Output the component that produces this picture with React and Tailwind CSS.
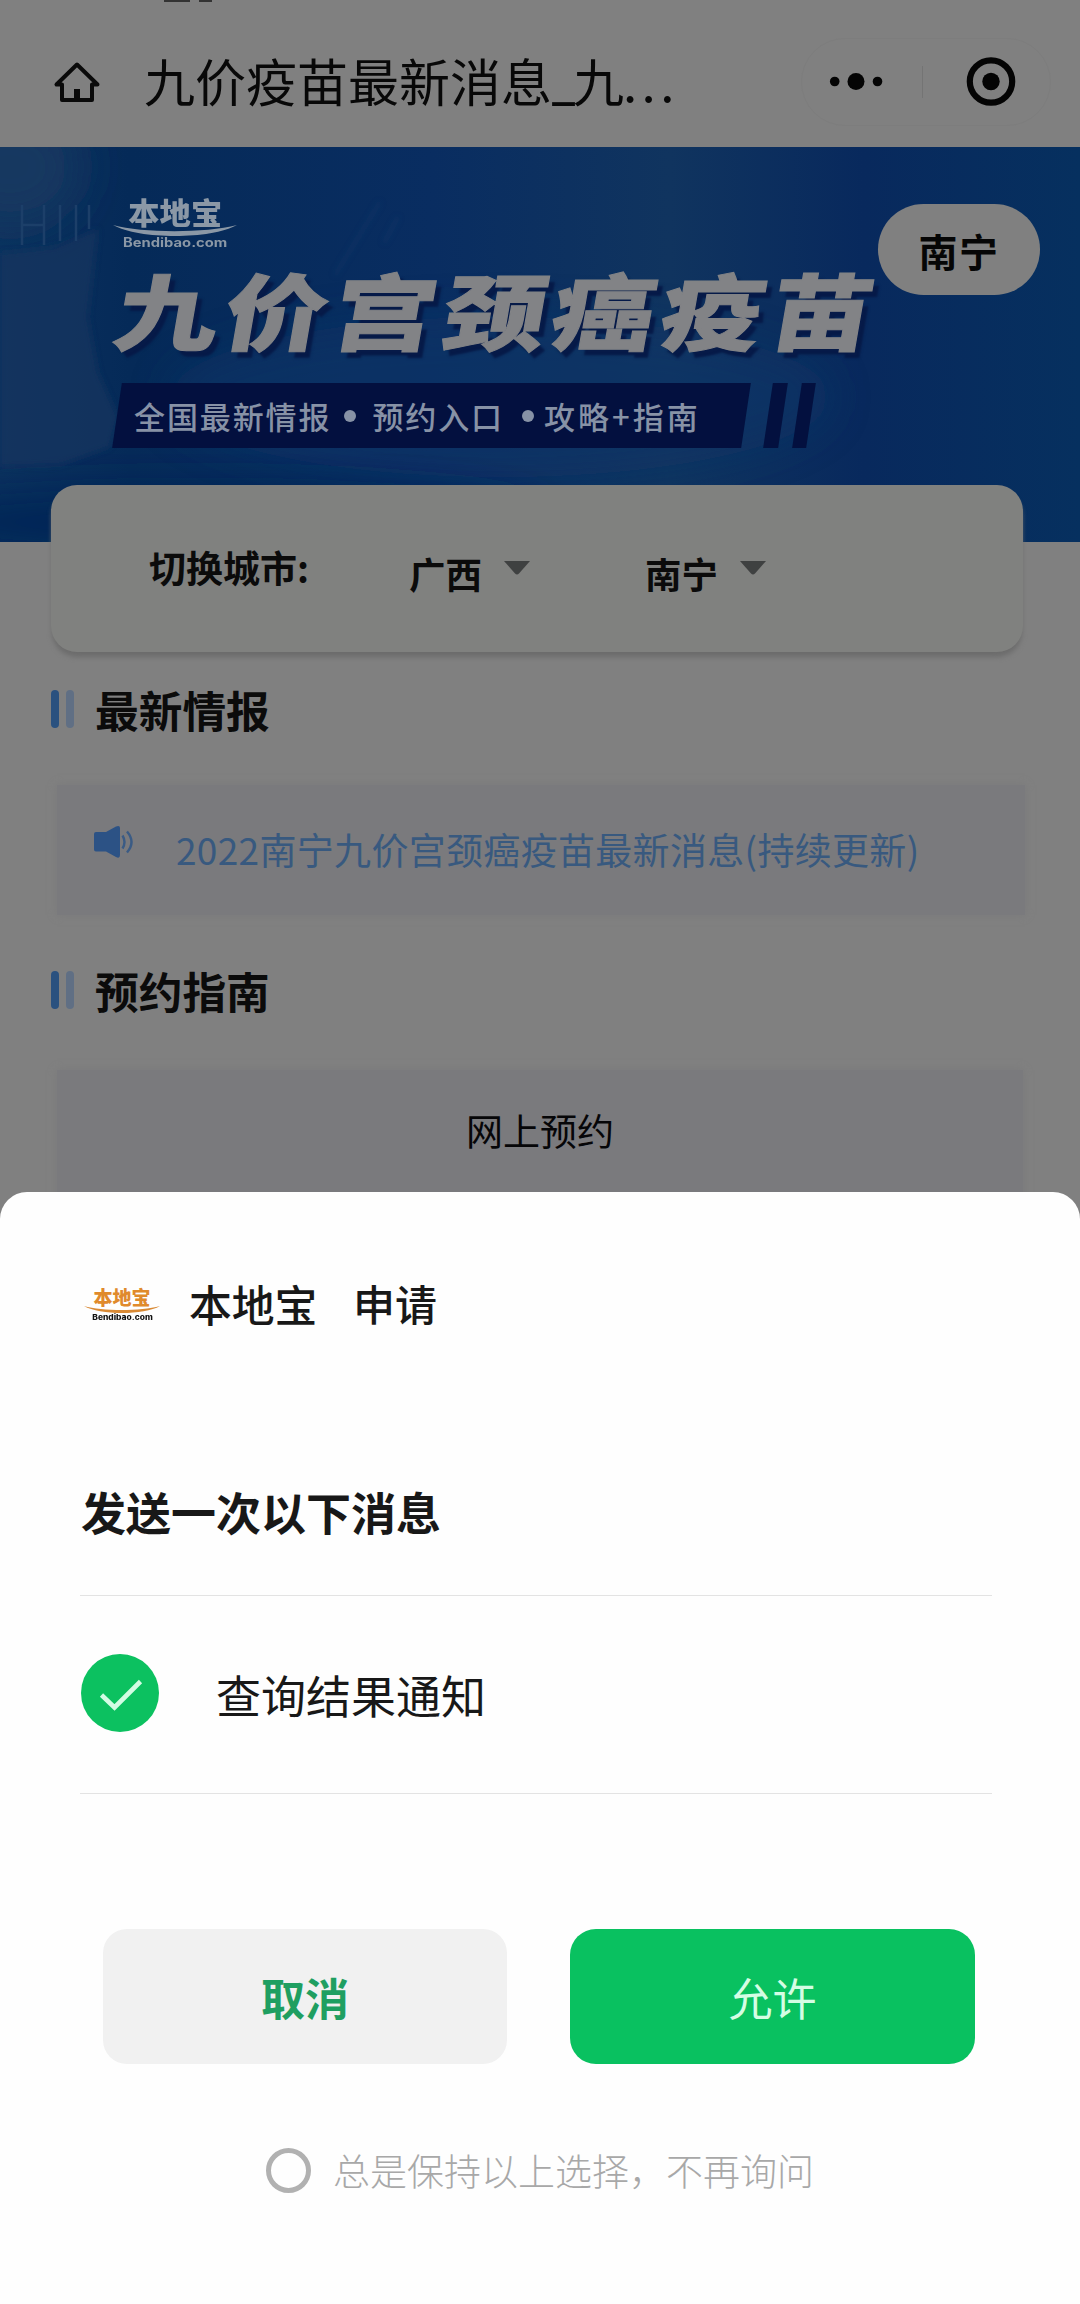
import React from "react";

function HomeIcon() {
  return (
    <svg className="h-[42px] w-[48px]" viewBox="0 0 48 42" fill="none" stroke="#0a0a0a" strokeWidth="4" strokeLinejoin="round">
      <path d="M24 3.5 L3.5 23.500 H9 V39 H39 V23.500 H44.500 Z" />
      <path d="M24 28 V39" strokeWidth="6" />
    </svg>
  );
}

function Capsule() {
  return (
    <div className="ml-auto mr-[29px] flex h-[88px] w-[250px] items-center rounded-full border border-[#7d7d7d]">
      <svg className="h-[60px] w-full" viewBox="0 0 248 60">
        <g fill="#040404">
          <circle cx="32.700" cy="29.500" r="4.800" />
          <circle cx="54" cy="29.500" r="8.500" />
          <circle cx="75.500" cy="29.500" r="4.800" />
          <circle cx="189" cy="29.500" r="8.700" />
        </g>
        <path d="M120.500 14 V46" stroke="#747474" strokeWidth="1" />
        <circle cx="189" cy="29.500" r="21.200" fill="none" stroke="#040404" strokeWidth="6.200" />
      </svg>
    </div>
  );
}

function TopBar() {
  return (
    <header className="relative flex h-[147px] items-start bg-[#808080]">
      <div className="absolute left-[164px] top-0 flex gap-[9px]">
        <i className="h-[2px] w-[26px] bg-[#333]" />
        <i className="h-[2px] w-[13px] bg-[#333]" />
      </div>
      <div className="mt-[61px] ml-[53px] w-[91px]">
        <HomeIcon />
      </div>
      <h1 className="mt-[43px] whitespace-nowrap text-[51px] leading-[74px] text-[#080808]">
        九价疫苗最新消息<span className="inline-block w-[21px] font-[Roboto]">_</span>九
        <span className="-ml-[1px] tracking-[4.400px]">...</span>
      </h1>
      <div className="mt-[38px] flex flex-1">
        <Capsule />
      </div>
    </header>
  );
}

function Swoosh({ className, color }) {
  return (
    <svg className={className} viewBox="0 0 124 12" preserveAspectRatio="none">
      <path d="M0 0 C30 9 92 9 124 0 C98 16 26 16 0 0 Z" fill={color} />
    </svg>
  );
}

function BannerLogo() {
  return (
    <div className="flex w-[124px] flex-col items-center text-[#8b98a6]">
      <div className="h-[28px] scale-x-[1.06] whitespace-nowrap text-[29.500px] font-black leading-[29px]">本地宝</div>
      <Swoosh className="h-[11px] w-[124px]" color="#8b98a6" />
      <div className="h-[14px] origin-center scale-x-[1.18] text-[12.500px] font-bold leading-[13px] font-[Inter]">
        Bendibao.com
      </div>
    </div>
  );
}

function BannerArt() {
  return (
    <svg className="absolute inset-0 h-full w-full" viewBox="0 0 1080 395" preserveAspectRatio="none">
      <defs>
        <linearGradient id="sky" x1="0" x2="1" y1="0" y2="0">
          <stop offset="0" stopColor="#0b315e" />
          <stop offset="0.12" stopColor="#052a58" />
          <stop offset="0.4" stopColor="#092d61" />
          <stop offset="0.62" stopColor="#10345f" />
          <stop offset="0.8" stopColor="#08295d" />
          <stop offset="1" stopColor="#06305f" />
        </linearGradient>
        <filter id="soft" x="-50%" y="-50%" width="200%" height="200%">
          <feGaussianBlur stdDeviation="20" />
        </filter>
        <filter id="edge">
          <feGaussianBlur stdDeviation="3" />
        </filter>
      </defs>
      <rect width="1080" height="395" fill="url(#sky)" />
      <ellipse cx="10" cy="20" rx="70" ry="60" fill="#143760" filter="url(#soft)" />
      <ellipse cx="500" cy="250" rx="330" ry="80" fill="#0c3567" opacity="0.600" filter="url(#soft)" />
      <ellipse cx="200" cy="375" rx="340" ry="34" fill="#062657" filter="url(#soft)" />
      <path d="M0 106 L55 100 L98 82 L88 170 L98 225 L118 270 L110 300 L60 318 L0 320 Z" fill="#14365e" opacity="0.750" filter="url(#edge)" />
      <path d="M22 58 V98 M44 58 V98 M22 78 H44 M60 58 V94 M76 58 V94 M89 58 V82" stroke="#1c3f69" strokeWidth="2.500" fill="none" />
      <path d="M380 55 L335 128 M398 70 L384 96" stroke="#1a4271" strokeWidth="2" opacity="0.500" filter="url(#edge)" />
    </svg>
  );
}

function Banner() {
  return (
    <section className="relative h-[395px] overflow-hidden bg-[#082c5e]">
      <BannerArt />
      <div className="relative pl-[113px] pt-[50px]">
        <BannerLogo />
        <h2 className="mt-[8px] h-[100px] w-[620px] origin-left translate-x-[4px] -skew-x-[8deg] scale-x-[1.235] whitespace-nowrap text-[83px] font-black leading-[100px] tracking-[5.400px] text-[#828386] [-webkit-text-stroke:1px_#828386] [text-shadow:5px_6px_2px_#061a48]">
          九价宫颈癌疫苗
        </h2>
        <div className="mt-[25px] flex items-stretch">
          <div className="relative flex h-[65px] w-[638px] items-center">
            <div className="absolute inset-y-0 left-[4px] w-[629px] -skew-x-[8.500deg] bg-[#03103f]" />
            <div className="relative flex h-[65px] items-center whitespace-nowrap pl-[21px] text-[31px] leading-[60px] tracking-[1.900px] text-[#8792a6] font-medium">
              <span>全国最新情报</span>
              <i className="ml-[13px] h-[12px] w-[12px] rounded-full bg-[#8792a6]" />
              <span className="ml-[16px]">预约入口</span>
              <i className="ml-[18px] h-[12px] w-[12px] rounded-full bg-[#8792a6]" />
              <span className="ml-[10px] tracking-[3px]">攻略+指南</span>
            </div>
          </div>
          <i className="ml-[17px] w-[15px] -skew-x-[8.500deg] bg-[#03103f]" />
          <i className="ml-[14px] w-[14px] -skew-x-[8.500deg] bg-[#03103f]" />
        </div>
      </div>
      <button className="absolute right-[40px] top-[57px] h-[91px] w-[162px] rounded-full bg-[#808080] text-[39px] font-bold leading-[86px] tracking-[1.500px] text-[#060606]">
        南宁
      </button>
    </section>
  );
}

function Caret() {
  return (
    <svg className="h-[14px] w-[26px]" viewBox="0 0 26 14">
      <path d="M0 0 H26 L15 12.500 Q13 14.500 11 12.500 Z" fill="#3f4141" />
    </svg>
  );
}

function CityPicker() {
  return (
    <section className="relative -mt-[57px] ml-[51px] flex h-[167px] w-[972px] items-start rounded-[26px] bg-[#80817f] pl-[98px] text-[37px] font-bold leading-[54px] text-[#0b0b0b] shadow-[0_6px_5px_-1px_#6c6c6c]">
      <span className="mt-[55px] w-[260px]">切换城市:</span>
      <span className="mt-[62px] w-[95px] text-[36.500px]">广西</span>
      <span className="mt-[76px] flex w-[141px]">
        <Caret />
      </span>
      <span className="mt-[62px] w-[95px] text-[36.500px]">南宁</span>
      <span className="mt-[76px] flex">
        <Caret />
      </span>
    </section>
  );
}

function SectionTitle({ children, className }) {
  return (
    <div className={"flex h-[64px] items-start pl-[51px] " + className}>
      <i className="mt-[11px] h-[38px] w-[8px] rounded-full bg-[#2a517f]" />
      <i className="ml-[7px] mt-[11px] h-[38px] w-[8px] rounded-full bg-[#606f84]" />
      <h3 className="ml-[21px] text-[43.700px] font-bold leading-[61px] text-[#0b0b0b]">{children}</h3>
    </div>
  );
}

function SpeakerIcon() {
  return (
    <svg className="h-[34px] w-[40px]" viewBox="0 0 40 34">
      <path d="M2 7 H12 L22 1.500 Q26 0 26 3 V30 Q26 34 22 32 L12 26.500 H2 Q0 26.500 0 24.500 V9 Q0 7 2 7 Z" fill="#2c5285" />
      <path d="M28.500 10.500 Q32.500 17 28.500 23.500 M33 6.500 Q42 17 33 27.500" fill="none" stroke="#3a5b85" strokeWidth="2.400" />
    </svg>
  );
}

function PageBody() {
  return (
    <main className="bg-[#808080]">
      <CityPicker />
      <SectionTitle className="mt-[27px]">最新情报</SectionTitle>
      <div className="ml-[57px] mt-[42px] flex h-[130px] w-[968px] items-start bg-[#7a7a7d] shadow-[0_0_8px_#7a7a7b]">
        <div className="ml-[37px] mt-[40px] w-[82px]">
          <SpeakerIcon />
        </div>
        <p className="mt-[37px] whitespace-nowrap text-[37px] leading-[54px] tracking-[0.320px] text-[#38597f]">
          2022南宁九价宫颈癌疫苗最新消息(持续更新)
        </p>
      </div>
      <SectionTitle className="mt-[45px]">预约指南</SectionTitle>
      <div className="ml-[57px] mt-[46px] h-[140px] w-[966px] bg-[#7a7a7d] pt-[33px] text-center text-[37px] leading-[54px] text-[#060608] shadow-[0_0_8px_#7a7a7b]">
        网上预约
      </div>
    </main>
  );
}

function SheetLogo() {
  return (
    <div className="flex w-[76px] flex-col items-center">
      <div className="h-[19px] whitespace-nowrap text-[19px] font-black leading-[19px] text-[#e08a2c]">本地宝</div>
      <Swoosh className="h-[7px] w-[76px]" color="#d98a35" />
      <div className="h-[12px] scale-x-[1.14] text-[7.400px] font-extrabold leading-[10px] text-[#111] font-[Inter]">
        Bendibao.com
      </div>
    </div>
  );
}

function PermissionSheet() {
  return (
    <div className="absolute inset-x-0 bottom-0 h-[1112px] rounded-t-[27px] bg-[#fefefe] text-[#181818]">
      <div className="flex items-start pl-[84px] pt-[94px]">
        <div className="mt-[1px] w-[105px]">
          <SheetLogo />
        </div>
        <div className="-mt-[15px] flex text-[42.800px] font-medium leading-[64px]">
          <span className="w-[164px]">本地宝</span>
          <span className="text-[42px]">申请</span>
        </div>
      </div>
      <h3 className="ml-[81px] mt-[145px] h-[64px] text-[45px] font-bold leading-[64px]">发送一次以下消息</h3>
      <div className="ml-[80px] mt-[51px] flex h-[199px] w-[912px] items-start border-y border-[#e3e3e3]">
        <svg className="ml-[1px] mt-[58px] h-[78px] w-[78px]" viewBox="0 0 78 78">
          <circle cx="39" cy="39" r="39" fill="#0cc160" />
          <path d="M20.500 41 L33.500 53.500 L59.500 27.500" fill="none" stroke="#d3fce4" strokeWidth="4.600" />
        </svg>
        <span className="ml-[57px] mt-[67px] text-[45px] leading-[64px]">查询结果通知</span>
      </div>
      <div className="mt-[135px] flex pl-[103px] text-[44px] leading-[132px]">
        <button className="h-[135px] w-[404px] rounded-[24px] bg-[#f1f1f1] font-bold text-[#1f9f61]">取消</button>
        <button className="ml-[63px] h-[135px] w-[405px] rounded-[26px] bg-[#09c160] text-[#d4fde4]">允许</button>
      </div>
      <label className="mt-[78px] flex items-center pl-[266px]">
        <i className="mt-[1px] h-[45px] w-[45px] rounded-full border-[5px] border-[#b1b1b1]" />
        <span className="ml-[22px] whitespace-nowrap text-[37px] font-light leading-[56px] text-[#a8a8a8]">总是保持以上选择，不再询问</span>
      </label>
    </div>
  );
}

export default function App() {
  return (
    <div className="relative h-[2304px] w-[1080px] overflow-hidden bg-[#808080] font-['Noto_Sans_CJK_SC',sans-serif]">
      <TopBar />
      <Banner />
      <PageBody />
      <PermissionSheet />
    </div>
  );
}
